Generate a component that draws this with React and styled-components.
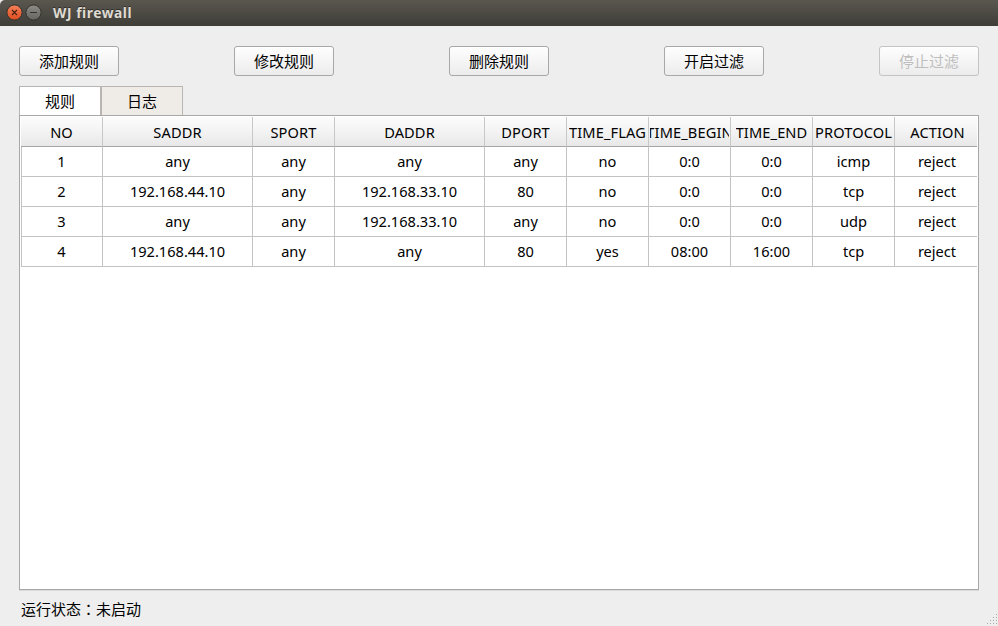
import React from "react";
import styled, { createGlobalStyle } from "styled-components";

const GlobalStyle = createGlobalStyle`
  * { box-sizing: border-box; }
  body {
    margin: 0;
    background: #eeeeee;
    color: #000;
    font: 14.6px "Noto Sans", "Noto Sans CJK SC", sans-serif;
  }
`;

const Window = styled.div`
  display: flex;
  flex-direction: column;
  width: 998px;
  height: 626px;
  overflow: hidden;
  background: #eeeeee;
`;

const TitleBar = styled.header`
  display: flex;
  align-items: center;
  flex: none;
  height: 26px;
  padding: 0 0 1px 6px;
  border-top-left-radius: 5px;
  background: linear-gradient(#5a574f, #3e3d38);
`;

const WindowButton = styled.svg`
  width: 17px;
  height: 17px;
  margin-right: 2px;
`;

const Title = styled.h1`
  margin: 0 0 0 9px;
  color: #dfdbd2;
  font-size: 13.8px;
  font-weight: 700;
  line-height: 24px;
  letter-spacing: 0.55px;
  text-shadow: 0 -1px 0 #2e2d29;
`;

const Content = styled.main`
  display: flex;
  flex-direction: column;
  flex: 1;
  padding: 20px 19px 0;
`;

const Toolbar = styled.div`
  display: flex;
  justify-content: space-between;
`;

const PushButton = styled.button`
  width: 100px;
  height: 30px;
  padding: 0;
  border: 1px solid #a8a8a8;
  border-radius: 3px;
  background: linear-gradient(#fefefe, #ececec);
  color: #000;
  font: 15px/28px "Noto Sans CJK SC", sans-serif;

  &:disabled {
    border-color: #c4c4c4;
    color: #bebebe;
  }
`;

const TabBar = styled.div`
  display: flex;
  margin-top: 10px;
`;

const Tab = styled.div`
  width: ${(p) => (p.$active ? 81 : 83)}px;
  height: 29px;
  border: solid #b8b5b2;
  border-width: ${(p) => (p.$active ? "1px 0 0 1px" : "1px 1px 0 2px")};
  background: ${(p) => (p.$active ? "#ffffff" : "#efebe7")};
  font: 15px/27px "Noto Sans CJK SC", sans-serif;
  text-align: center;
`;

const Pane = styled.section`
  height: 475px;
  padding: 1px;
  border: 1px solid #a8a8a8;
  background: #fff;
  box-shadow: 0 1px 0 #d9d9d9;
`;

const Row = styled.div`
  display: grid;
  grid-template-columns: 82px 150px 82px 150px repeat(6, 82px);
`;

const HeaderCell = styled.div`
  display: flex;
  justify-content: center;
  height: 30px;
  border-right: 1px solid #c8c8c8;
  border-bottom: 1px solid #a6a6a6;
  background: linear-gradient(#fcfcfc, #f3f3f3 50%, #e8e8e8);
  line-height: 31px;
  letter-spacing: 0.12px;
  white-space: nowrap;

  &:last-child {
    padding-left: 3px;
    border-right: 0;
  }
`;

const HeaderLabel = styled.span`
  display: flex;
  justify-content: center;
  overflow: hidden;
  max-width: 79px;
`;

const Cell = styled.div`
  height: 30px;
  border-right: 1px solid #c3c3c3;
  border-bottom: 1px solid #c3c3c3;
  line-height: 29px;
  text-align: center;

  &:first-child {
    padding-right: 1px;
    border-left: 1px solid #c3c3c3;
  }
  &:last-child {
    padding-left: 2px;
    border-right: 0;
  }
`;

const StatusBar = styled.footer`
  display: flex;
  align-items: flex-end;
  justify-content: space-between;
  height: 36px;
  padding: 0 1px 0 21px;
`;

const Status = styled.span`
  align-self: flex-start;
  font: 15px/37px "Noto Sans CJK SC", sans-serif;
`;

const Colon = styled.span`
  font-family: "Noto Sans CJK TC", sans-serif;
`;

const Grip = styled.svg`
  width: 10px;
  height: 12px;
`;

const columns = [
  "NO",
  "SADDR",
  "SPORT",
  "DADDR",
  "DPORT",
  "TIME_FLAG",
  "TIME_BEGIN",
  "TIME_END",
  "PROTOCOL",
  "ACTION",
];

const rules = [
  ["1", "any", "any", "any", "any", "no", "0:0", "0:0", "icmp", "reject"],
  ["2", "192.168.44.10", "any", "192.168.33.10", "80", "no", "0:0", "0:0", "tcp", "reject"],
  ["3", "any", "any", "192.168.33.10", "any", "no", "0:0", "0:0", "udp", "reject"],
  ["4", "192.168.44.10", "any", "any", "80", "yes", "08:00", "16:00", "tcp", "reject"],
];

const gripDots = [
  [9, 0], [6, 3], [9, 3], [3, 6], [6, 6], [9, 6], [0, 9], [3, 9], [6, 9], [9, 9],
];

export default function App() {
  return (
    <>
      <GlobalStyle />
      <Window>
        <TitleBar>
          <WindowButton viewBox="0 0 17 17">
            <defs>
              <linearGradient id="close" x1="0" y1="0" x2="0" y2="1">
                <stop offset="0" stopColor="#f4815b" />
                <stop offset="1" stopColor="#dd4c1e" />
              </linearGradient>
            </defs>
            <circle cx="8.5" cy="8.5" r="7.6" fill="url(#close)" stroke="#33322e" />
            <path d="M6 6l5 5M11 6l-5 5" stroke="#45210f" strokeWidth="1.1" />
          </WindowButton>
          <WindowButton viewBox="0 0 17 17">
            <defs>
              <linearGradient id="minimize" x1="0" y1="0" x2="0" y2="1">
                <stop offset="0" stopColor="#8d8b84" />
                <stop offset="1" stopColor="#67655f" />
              </linearGradient>
            </defs>
            <circle cx="8.5" cy="8.5" r="7.6" fill="url(#minimize)" stroke="#33322e" />
            <path d="M5 8.5h7" stroke="#33322e" />
          </WindowButton>
          <Title>WJ firewall</Title>
        </TitleBar>
        <Content>
          <Toolbar>
            <PushButton>添加规则</PushButton>
            <PushButton>修改规则</PushButton>
            <PushButton>删除规则</PushButton>
            <PushButton>开启过滤</PushButton>
            <PushButton disabled>停止过滤</PushButton>
          </Toolbar>
          <TabBar>
            <Tab $active>规则</Tab>
            <Tab>日志</Tab>
          </TabBar>
          <Pane>
            <Row>
              {columns.map((name) => (
                <HeaderCell key={name}>
                  <HeaderLabel>{name}</HeaderLabel>
                </HeaderCell>
              ))}
            </Row>
            {rules.map((rule) => (
              <Row key={rule[0]}>
                {rule.map((value, i) => (
                  <Cell key={i}>{value}</Cell>
                ))}
              </Row>
            ))}
          </Pane>
        </Content>
        <StatusBar>
          <Status>运行状态<Colon lang="zh-TW">：</Colon>未启动</Status>
          <Grip viewBox="0 0 10 12">
            {gripDots.map(([x, y]) => (
              <rect key={`${x}-${y}`} x={x} y={y} width="1" height="1" fill="#a9a9a9" />
            ))}
          </Grip>
        </StatusBar>
      </Window>
    </>
  );
}
